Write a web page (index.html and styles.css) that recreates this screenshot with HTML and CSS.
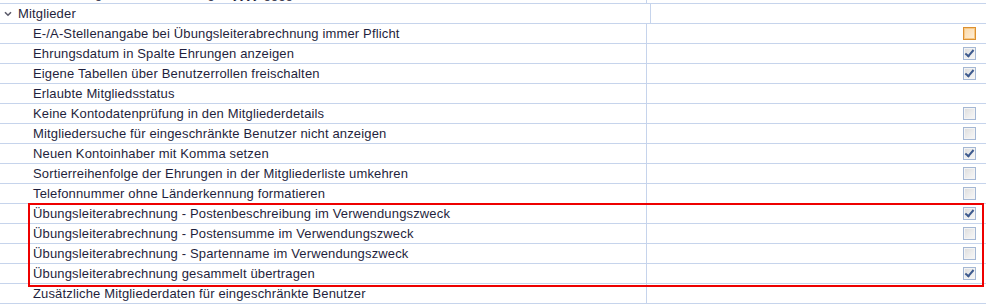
FILE: index.html
```html
<!DOCTYPE html>
<html lang="de">
<head>
<meta charset="utf-8">
<title>Mitglieder</title>
<link rel="stylesheet" href="styles.css">
</head>
<body>
<div class="grid">
  <div class="row partial">
    <div class="cell name"><span class="text item">Allgemeine Einstellungen yyyy gggg</span></div>
    <div class="cell value"></div>
  </div>
  <div class="row">
    <div class="cell name group">
      <svg class="chev" width="8" height="6" viewBox="0 0 8 6"><path d="M1 1.2 L4 4.2 L7 1.2" fill="none" stroke="#5a5a6a" stroke-width="1.6"/></svg>
      <span class="text">Mitglieder</span>
    </div>
    <div class="cell value"></div>
  </div>
  <div class="row">
    <div class="cell name"><span class="text item">E-/A-Stellenangabe bei Übungsleiterabrechnung immer Pflicht</span></div>
    <div class="cell value"><span class="cb focus"></span></div>
  </div>
  <div class="row">
    <div class="cell name"><span class="text item">Ehrungsdatum in Spalte Ehrungen anzeigen</span></div>
    <div class="cell value"><span class="cb checked"></span></div>
  </div>
  <div class="row">
    <div class="cell name"><span class="text item">Eigene Tabellen über Benutzerrollen freischalten</span></div>
    <div class="cell value"><span class="cb checked"></span></div>
  </div>
  <div class="row">
    <div class="cell name"><span class="text item">Erlaubte Mitgliedsstatus</span></div>
    <div class="cell value"></div>
  </div>
  <div class="row">
    <div class="cell name"><span class="text item">Keine Kontodatenprüfung in den Mitgliederdetails</span></div>
    <div class="cell value"><span class="cb"></span></div>
  </div>
  <div class="row">
    <div class="cell name"><span class="text item">Mitgliedersuche für eingeschränkte Benutzer nicht anzeigen</span></div>
    <div class="cell value"><span class="cb"></span></div>
  </div>
  <div class="row">
    <div class="cell name"><span class="text item">Neuen Kontoinhaber mit Komma setzen</span></div>
    <div class="cell value"><span class="cb checked"></span></div>
  </div>
  <div class="row">
    <div class="cell name"><span class="text item">Sortierreihenfolge der Ehrungen in der Mitgliederliste umkehren</span></div>
    <div class="cell value"><span class="cb"></span></div>
  </div>
  <div class="row">
    <div class="cell name"><span class="text item">Telefonnummer ohne Länderkennung formatieren</span></div>
    <div class="cell value"><span class="cb"></span></div>
  </div>
  <div class="highlight">
    <div class="row">
      <div class="cell name"><span class="text item">Übungsleiterabrechnung - Postenbeschreibung im Verwendungszweck</span></div>
      <div class="cell value"><span class="cb checked"></span></div>
    </div>
    <div class="row">
      <div class="cell name"><span class="text item">Übungsleiterabrechnung - Postensumme im Verwendungszweck</span></div>
      <div class="cell value"><span class="cb"></span></div>
    </div>
    <div class="row">
      <div class="cell name"><span class="text item">Übungsleiterabrechnung - Spartenname im Verwendungszweck</span></div>
      <div class="cell value"><span class="cb"></span></div>
    </div>
    <div class="row">
      <div class="cell name"><span class="text item">Übungsleiterabrechnung gesammelt übertragen</span></div>
      <div class="cell value"><span class="cb checked"></span></div>
    </div>
  </div>
  <div class="row">
    <div class="cell name"><span class="text item">Zusätzliche Mitgliederdaten für eingeschränkte Benutzer</span></div>
    <div class="cell value"></div>
  </div>
</div>
</body>
</html>
```

FILE: styles.css
```css
html, body {
  margin: 0;
  padding: 0;
  background: #ffffff;
  overflow: hidden;
}

body {
  width: 986px;
  height: 304px;
  font-family: "Liberation Sans", Arial, sans-serif;
  font-size: 13px;
  letter-spacing: 0.15px;
  color: #1f1f3d;
}

.grid {
  display: flex;
  flex-direction: column;
  margin-top: -16px;
}

.row {
  display: flex;
  height: 19px;
  border-bottom: 1px solid #c6d4ec;
}

.cell {
  display: flex;
  align-items: center;
  height: 19px;
  white-space: nowrap;
  overflow: hidden;
}

.name {
  width: 646px;
  border-right: 1px solid #c6d4ec;
}

.value {
  flex: 1;
  justify-content: flex-end;
  padding-right: 10px;
}

.group {
  padding-left: 4px;
}

.chev {
  margin-right: 6px;
  margin-top: 1px;
}

.text {
  line-height: 19px;
}

.item {
  padding-left: 33px;
}

.partial .item {
  padding-left: 80px;
  position: relative;
  top: 0px;
}

.cb {
  width: 11px;
  height: 11px;
  border: 1px solid #a4b7d4;
  background: linear-gradient(135deg, #dcdcdc 0%, #eeeeee 60%, #f7f7f7 100%);
  box-shadow: inset 0 0 0 1px #f4f4f4;
  position: relative;
}

.cb.checked::after {
  content: "";
  position: absolute;
  left: 3px;
  top: 0px;
  width: 3px;
  height: 7px;
  border-right: 2px solid #3d5a8e;
  border-bottom: 2px solid #3d5a8e;
  transform: rotate(40deg);
}

.cb.focus {
  border-color: #dd9030;
  background: linear-gradient(135deg, #fbd9a8 0%, #fde6c6 60%, #fef1dd 100%);
  box-shadow: inset 0 0 0 1px #f6c987;
}

.highlight {
  position: relative;
}

.highlight::after {
  content: "";
  position: absolute;
  left: 28px;
  right: 2px;
  top: -1px;
  bottom: -3px;
  border: 2px solid #ee0000;
  pointer-events: none;
}
```
